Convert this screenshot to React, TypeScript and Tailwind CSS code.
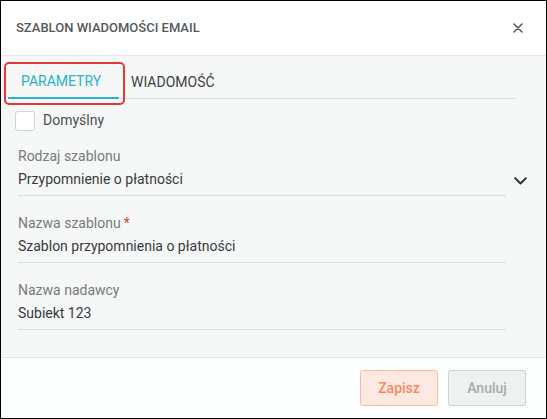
import React from 'react';

function CloseIcon() {
  return (
    <svg width="10" height="10" viewBox="0 0 10 10" className="text-[#55595c]">
      <path d="M1 1L9 9M9 1L1 9" stroke="currentColor" strokeWidth="1.6" strokeLinecap="round" />
    </svg>
  );
}

function ChevronDown() {
  return (
    <svg width="13" height="8" viewBox="0 0 13 8" className="text-[#30363a]">
      <path d="M1.2 1.2L6.5 6.5L11.8 1.2" stroke="currentColor" strokeWidth="2" fill="none" strokeLinecap="round" strokeLinejoin="round" />
    </svg>
  );
}

type FieldProps = {
  label: string;
  value: string;
  required?: boolean;
  select?: boolean;
};

function Field({ label, value, required, select }: FieldProps) {
  return (
    <div className="relative">
      <div className="ml-[17px] mr-[40px] border-b border-[#dcdfe0] pb-[6px]">
        <div className="h-5 leading-5 text-[14px] text-[#767b7e]">
          {label}
          {required && <span className="text-[#e8373a] ml-[3px]">*</span>}
        </div>
        <div className="mt-[3px] h-5 leading-5 text-[14px] text-[#363b3e]">{value}</div>
      </div>
      {select && (
        <div className="absolute right-[19px] top-[31px]">
          <ChevronDown />
        </div>
      )}
    </div>
  );
}

export default function App() {
  return (
    <div
      className="w-[547px] h-[419px] border border-black flex flex-col bg-white"
      style={{ fontFamily: 'Roboto, "Liberation Sans", sans-serif' }}
    >
      <div className="h-[54px] shrink-0 border-b border-[#e4e7e8] flex items-center justify-between pl-[15px] pr-[23px] box-content">
        <h1 className="text-[13px] font-medium text-[#55595c]">SZABLON WIADOMOŚCI EMAIL</h1>
        <CloseIcon />
      </div>

      <div className="flex-1 bg-[#f6f7f7] border-b border-[#e4e7e8] pt-[10px] relative">
        <div className="ml-[7px] mr-[30px] flex border-b border-[#dcdfe0] h-[33px]">
          <div className="w-[111px] pl-[13px] flex items-center text-[14px] text-[#26b4c8] border-b-2 border-[#26b4c8] -mb-px">
            PARAMETRY
          </div>
          <div className="pl-[12px] flex items-center text-[14px] text-[#3d4245]">
            WIADOMOŚĆ
          </div>
        </div>

        <div className="absolute left-[3px] top-[6px] w-[121px] h-[43px] border-2 border-[#e8373a] rounded-[5px]" />

        <label className="mt-[11px] ml-[14px] flex items-center gap-[8px]">
          <span className="w-[20px] h-[20px] rounded-[3px] border border-[#cfd4d6] bg-white" />
          <span className="text-[14px] text-[#4a4f52]">Domyślny</span>
        </label>

        <div className="mt-[15px] flex flex-col gap-[17px]">
          <Field label="Rodzaj szablonu" value="Przypomnienie o płatności" select />
          <Field label="Nazwa szablonu" value="Szablon przypomnienia o płatności" required />
          <Field label="Nazwa nadawcy" value="Subiekt 123" />
        </div>
      </div>

      <div className="h-[60px] shrink-0 bg-[#fcfdfd] flex items-center justify-end gap-[10px] pr-[20px]">
        <button className="w-[78px] h-[36px] rounded-[3px] border border-[#f9bba4] bg-[#fde9e1] text-[14px] font-medium text-[#f68a64]">
          Zapisz
        </button>
        <button className="w-[78px] h-[36px] rounded-[3px] border border-[#cad0d3] bg-[#eff0f0] text-[14px] font-medium text-[#a4abaf]">
          Anuluj
        </button>
      </div>
    </div>
  );
}
